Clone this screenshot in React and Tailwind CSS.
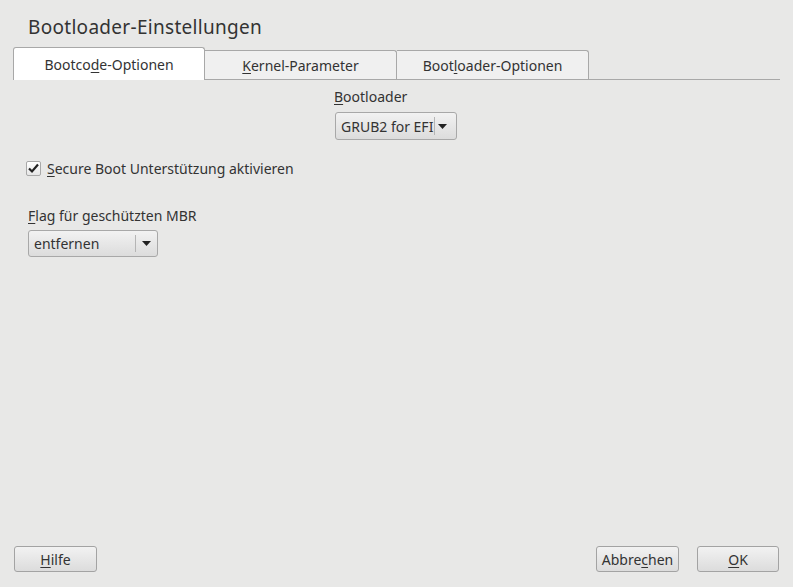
import React from 'react';

function U({ children }) {
  return <span className="underline underline-offset-2 decoration-1">{children}</span>;
}

function Arrow() {
  return (
    <svg width="9" height="5" viewBox="0 0 9 5">
      <path d="M0 0 L9 0 L4.5 5 Z" fill="#222" />
    </svg>
  );
}

function Button({ children, w }) {
  return (
    <button className={`h-[26px] ${w} rounded-[3px] border border-[#a3a3a3] bg-gradient-to-b from-[#f2f2f2] to-[#dcdcdc] text-[14px] text-[#333] flex items-center justify-center`}>
      {children}
    </button>
  );
}

export default function App() {
  return (
    <div
      className="w-[793px] h-[587px] bg-[#e8e8e7] text-[#333] flex flex-col overflow-hidden"
      style={{ fontFamily: '"Noto Sans", "Open Sans", sans-serif' }}
    >
      <h1 className="pl-[28px] pt-[14px] text-[19px] tracking-[0.3px] leading-[26px] text-[#333]">Bootloader-Einstellungen</h1>

      {/* tabs */}
      <div className="mt-[7px] ml-[13px] mr-[13px] flex items-end border-b border-[#a8a8a8] h-[33px]">
        <div className="w-[192px] h-[33px] -mb-px bg-white border border-b-0 border-[#a8a8a8] rounded-t-[3px] flex items-center justify-center text-[14px]">
          Bootco<U>d</U>e-Optionen
        </div>
        <div className="w-[192px] h-[29px] bg-[#f0f0f0] border border-l-0 border-b-0 border-[#a8a8a8] rounded-tr-[3px] flex items-center justify-center text-[14px]">
          <U>K</U>ernel-Parameter
        </div>
        <div className="w-[192px] h-[29px] bg-[#f0f0f0] border border-l-0 border-b-0 border-[#a8a8a8] rounded-tr-[3px] flex items-center justify-center text-[14px]">
          Boot<U>l</U>oader-Optionen
        </div>
      </div>

      <div className="flex flex-col flex-1">
        <div className="flex flex-col items-start ml-[334px] mt-[7px]">
          <span className="text-[14px] leading-[20px]"><U>B</U>ootloader</span>
          <div className="mt-[5px] ml-px h-[28px] w-[122px] rounded-[3px] border border-[#a8a8a8] bg-gradient-to-b from-[#f2f2f2] to-[#dcdcdc] flex items-center pl-[5px] text-[14px]">
            <span>GRUB2 for EFI</span>
            <span className="w-px h-[18px] bg-[#b5b5b5] ml-[1px]"></span>
            <span className="ml-[3px]"><Arrow /></span>
          </div>
        </div>

        <div className="flex items-center ml-[26px] mt-[18px]">
          <div className="w-[15px] h-[15px] rounded-[2px] border border-[#a8a8a8] bg-gradient-to-b from-white to-[#e6e6e6] flex items-center justify-center">
            <svg width="13" height="11" viewBox="0 0 13 11">
              <path d="M2 5.5 L5 8.5 L11 1.5" stroke="#222" strokeWidth="2.2" fill="none" />
            </svg>
          </div>
          <span className="ml-[6px] text-[14px]"><U>S</U>ecure Boot Unterstützung aktivieren</span>
        </div>

        <div className="flex flex-col items-start ml-[28px] mt-[27px]">
          <span className="text-[14px] leading-[20px]"><U>F</U>lag für geschützten MBR</span>
          <div className="mt-[4px] h-[27px] w-[130px] rounded-[3px] border border-[#a8a8a8] bg-gradient-to-b from-[#f2f2f2] to-[#dcdcdc] flex items-center pl-[5px] text-[14px]">
            <span className="flex-1">entfernen</span>
            <span className="w-px h-[17px] bg-[#b5b5b5]"></span>
            <span className="w-[21px] flex justify-center"><Arrow /></span>
          </div>
        </div>
      </div>

      {/* bottom buttons */}
      <div className="flex items-center px-[14px] pb-[15px]">
        <Button w="w-[83px]"><U>H</U>ilfe</Button>
        <div className="flex-1" />
        <Button w="w-[83px]">Abbre<U>c</U>hen</Button>
        <div className="w-[18px]" />
        <Button w="w-[82px]"><U>O</U>K</Button>
      </div>
    </div>
  );
}
